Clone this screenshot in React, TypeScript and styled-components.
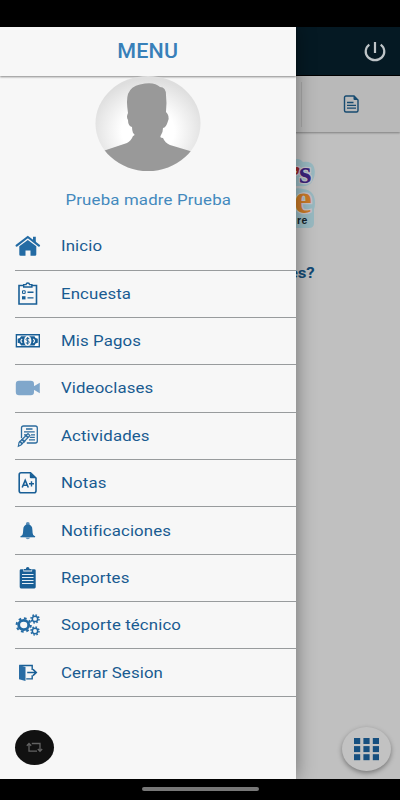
import React from 'react';
import styled, { createGlobalStyle } from 'styled-components';

const GlobalStyle = createGlobalStyle`
  * { box-sizing: border-box; }
  html, body { margin: 0; padding: 0; background: #000; }
  body { font-family: Roboto, "Liberation Sans", sans-serif; overflow: hidden; }
  svg { display: block; }
`;

const Phone = styled.div`
  width: 400px;
  height: 800px;
  display: grid;
  grid-template-rows: 27px 752px 21px;
  background: #000;
`;

const StatusBar = styled.div`
  background: #000;
`;

const Screen = styled.div`
  position: relative;
  overflow: hidden;
  background: #c0c0c0;
`;

const NavigationBar = styled.div`
  display: flex;
  justify-content: center;
  align-items: center;
  padding-bottom: 2px;
`;

const HomeHandle = styled.div`
  width: 117px;
  height: 4px;
  border-radius: 2px;
  background: #777;
`;

const Page = styled.main`
  height: 100%;
  display: flex;
  flex-direction: column;
`;

const PageHeader = styled.header`
  height: 49px;
  flex: none;
  display: flex;
  align-items: center;
  justify-content: flex-end;
  padding: 1px 13px 0 0;
  background: #051923;
  border-bottom: 1px solid #000;
`;

const TabBar = styled.nav`
  height: 56px;
  flex: none;
  display: grid;
  grid-template-columns: 1fr 99px;
  align-items: center;
  background: #b9b9b9;
  box-shadow: 0 1px 2px rgba(0, 0, 0, 0.35);
`;

const Tab = styled.div`
  grid-column: 2;
  height: 45px;
  display: flex;
  align-items: center;
  justify-content: center;
  border-left: 1px solid #a7a7a7;
`;

const Welcome = styled.section`
  width: 230px;
  margin: 27px auto 0;
  display: flex;
  flex-direction: column;
  align-items: flex-end;
`;

const Question = styled.h2`
  margin: 34px 0 0;
  font-size: 15.3px;
  line-height: 20px;
  font-weight: 700;
  transform: scaleX(1.1);
  transform-origin: right;
  color: #124a74;
`;

const AppsButton = styled.button`
  position: absolute;
  right: 9px;
  bottom: 8px;
  width: 49px;
  height: 44px;
  padding: 0;
  border: 0;
  border-radius: 50%;
  display: grid;
  place-items: center;
  background: #c2c2c2;
  box-shadow: 0 2px 5px rgba(0, 0, 0, 0.38);
`;

const Drawer = styled.aside`
  position: absolute;
  top: 0;
  left: 0;
  bottom: 0;
  width: 296px;
  display: flex;
  flex-direction: column;
  background: #f7f7f7;
  box-shadow: 0 0 18px rgba(0, 0, 0, 0.42);
`;

const DrawerHeader = styled.header`
  height: 49px;
  flex: none;
  display: flex;
  align-items: center;
  justify-content: center;
  box-shadow: 0 1px 2px rgba(0, 0, 0, 0.45);
`;

const DrawerTitle = styled.h1`
  margin: 0;
  font-size: 19.5px;
  line-height: 24px;
  font-weight: 500;
  letter-spacing: 0.2px;
  transform: scaleX(1.1);
  color: #3880b9;
`;

const Profile = styled.div`
  height: 147.2px;
  flex: none;
  display: flex;
  flex-direction: column;
  align-items: center;
`;

const ProfileName = styled.div`
  margin-top: 19px;
  font-size: 15.3px;
  line-height: 20px;
  letter-spacing: 0.15px;
  transform: scaleX(1.1);
  color: #4389bd;
`;

const MenuList = styled.ul`
  list-style: none;
  margin: 0;
  padding: 0 0 0 15px;
`;

const MenuItem = styled.li`
  height: 47.36px;
  display: grid;
  grid-template-columns: 26px 1fr;
  column-gap: 20px;
  align-items: center;
  border-bottom: 1px solid #989b9d;
  color: #195b91;
  font-size: 15.3px;
  line-height: 20px;
`;

const Label = styled.span`
  letter-spacing: 0.1px;
  transform: scaleX(1.1);
  transform-origin: left;
`;

const SwitchButton = styled.button`
  margin: auto 0 14px 15px;
  width: 39px;
  height: 35px;
  padding: 0;
  border: 0;
  border-radius: 50%;
  display: grid;
  place-items: center;
  background: #111;
`;

const blue = '#195f96';

const icons = {
  home: (
    <svg width="26" height="24" viewBox="0 0 26 24">
      <path d="M1.600 11.600 12.800 3l11.200 8.600" fill="none" stroke="#236ba4" strokeWidth="2.200" strokeLinecap="round" strokeLinejoin="round" />
      <path d="M18 2.800h2.800v6L18 6.500z" fill="#236ba4" />
      <path d="M4.300 12.300 12.800 5.900l8.500 6.400v8.200q0 1.300-1.300 1.300h-4.500v-5.300h-5v5.300H5.600q-1.300 0-1.300-1.300z" fill="#236ba4" />
    </svg>
  ),
  survey: (
    <svg width="26" height="24" viewBox="0 0 26 24" fill="none" stroke={blue}>
      <path d="M9 3.500H4V22h17.500V3.500h-5" strokeWidth="1.600" />
      <path d="M8.700 2.600H11q.2-1.600 1.800-1.600t1.800 1.600h2.300V5H8.700z" strokeWidth="1.400" />
      <path d="M7.500 8.800h2.700v2.600H7.500z" strokeWidth="1" />
      <path d="M7 14.200h3.500v3.200H7z" fill={blue} stroke="none" />
      <path d="M12.500 10.200h6M12.500 15.900h6" strokeWidth="1.400" />
    </svg>
  ),
  money: (
    <svg width="26" height="24" viewBox="0 0 26 24">
      <path d="M1.400 5.700h22.900v12.100H1.400z" fill="#fff" stroke={blue} strokeWidth="1.400" />
      <path d="M6 7.200h13.500q.5 2.300 3.300 2.600v4q-2.800.3-3.300 2.600H6q-.5-2.300-3.300-2.600v-4Q5.500 9.500 6 7.200z" fill={blue} />
      <ellipse cx="12.700" cy="11.800" rx="3.700" ry="5.100" fill="#f7f7f7" />
      <path d="M14.300 9.700q-3.300-1.200-3.300.6 0 1 1.600 1.400t1.600 1.600q0 1.700-3.400.6M12.700 8v7.700" fill="none" stroke={blue} strokeWidth="1" />
      <path d="M7.200 9.900q-2.600 1.900 0 3.800M18.200 9.900q2.600 1.900 0 3.800" fill="none" stroke="#f7f7f7" strokeWidth="1.200" />
    </svg>
  ),
  video: (
    <svg width="26" height="24" viewBox="0 0 26 24" fill="#80a7cb">
      <rect x=".8" y="4.800" width="18.200" height="14.500" rx="3.200" />
      <path d="M18 10.800 24.800 6.800v10.500L18 13.300z" />
    </svg>
  ),
  activities: (
    <svg width="26" height="24" viewBox="0 0 26 24" fill="none" stroke="#2d6c9e">
      <path d="M6.500 14V4q0-2 2-2h11.800q2 0 2 2v13q0 2-2 2h-8.500" strokeWidth="1.300" />
      <path d="M11 5h6.500M9 7.900h10.700M9 10.800h4m3 0h4M14.800 13.300h5M14 15.800h6" strokeWidth="1.300" />
      <path d="m4 18.500 9-9 2 2-9 9.500-2.700 1.200z" fill="#dbe7f0" strokeWidth="1.100" />
      <path d="m6.500 15 3.500 3M4.500 17l3 3M10.500 11l2.500 2.500" strokeWidth="1.700" />
    </svg>
  ),
  grades: (
    <svg width="26" height="24" viewBox="0 0 26 24" fill="none" stroke={blue}>
      <path d="M15.500 1.700H6q-1.800 0-1.800 2v16.100q0 2 1.800 2h13.200q1.800 0 1.800-2V7z" strokeWidth="1.600" />
      <path d="M14.800 1.500v4.700q0 1 1 1h5.400z" fill={blue} stroke="none" />
      <path d="m7.200 16.500 3-7.200 3.100 7.200M8.200 14.200h4" strokeWidth="1.600" />
      <path d="M14 12.800h5M16.500 10.200v5.200" strokeWidth="1.400" />
    </svg>
  ),
  bell: (
    <svg width="26" height="24" viewBox="0 0 26 24" fill="#236aa1">
      <circle cx="12.800" cy="5" r="1.900" fill="#5b8eb8" />
      <path d="M7.400 16q.8-2.200.8-5 0-5.500 4.600-5.500t4.600 5.500q0 2.800.8 5l1.700 1.200H5.700z" />
      <path d="M5.500 17h14.600v1.300H5.500z" />
      <path d="M10.500 18.500h4.600q-.5 1.800-2.300 1.800t-2.300-1.800z" fill="#6895bb" />
    </svg>
  ),
  clipboard: (
    <svg width="26" height="24" viewBox="0 0 26 24" fill={blue}>
      <path d="M6 3.300h2.300v2.300h8.800V3.300h2.300q1.300 0 1.300 1.300v16.500q0 1.300-1.300 1.300H6q-1.300 0-1.300-1.300V4.600q0-1.300 1.300-1.300z" />
      <path d="M8.800 4.600V3h2q.2-2 1.900-2t1.900 2h2v1.600z" />
      <path d="M7 8.500h11.500M7 11.500h11.500M7 14.500h11.500M7 17.500h11.500" stroke="#e4eef5" strokeWidth="1" />
    </svg>
  ),
  gears: (
    <svg width="26" height="24" viewBox="0 0 26 24" fill="none" stroke="#236aa3">
      <ellipse cx="8.700" cy="12" rx="5" ry="4.700" strokeWidth="2.800" />
      <ellipse cx="8.700" cy="12" rx="7.100" ry="6.700" strokeWidth="2" strokeDasharray="2.700 2.720" />
      <circle cx="20" cy="5.900" r="2.700" strokeWidth="1.500" />
      <circle cx="20" cy="5.900" r="4" strokeWidth="1.500" strokeDasharray="1.570 1.570" />
      <circle cx="20" cy="18" r="2.700" strokeWidth="1.500" />
      <circle cx="20" cy="18" r="4" strokeWidth="1.500" strokeDasharray="1.570 1.570" />
    </svg>
  ),
  logout: (
    <svg width="26" height="24" viewBox="0 0 26 24" fill="none" stroke={blue}>
      <path d="M4.300 4.500h12.900V9M17.200 14.200v3.700h-6" strokeWidth="1.400" />
      <path d="M4 4 10.500 6v14L4 18.200z" fill="#2a6da4" stroke="none" />
      <path d="M12.200 11.500h8.500M18 8.400l3.300 3.100L18 14.600" strokeWidth="1.500" />
    </svg>
  ),
};

const items: { label: string; icon: keyof typeof icons }[] = [
  { label: 'Inicio', icon: 'home' },
  { label: 'Encuesta', icon: 'survey' },
  { label: 'Mis Pagos', icon: 'money' },
  { label: 'Videoclases', icon: 'video' },
  { label: 'Actividades', icon: 'activities' },
  { label: 'Notas', icon: 'grades' },
  { label: 'Notificaciones', icon: 'bell' },
  { label: 'Reportes', icon: 'clipboard' },
  { label: 'Soporte técnico', icon: 'gears' },
  { label: 'Cerrar Sesion', icon: 'logout' },
];

function Avatar() {
  return (
    <svg width="106" height="95" viewBox="0 0 106 95">
      <defs>
        <radialGradient id="avatarGlow" cx="50%" cy="58%" r="55%">
          <stop offset="0.45" stopColor="#fff" />
          <stop offset="1" stopColor="#dedede" />
        </radialGradient>
        <clipPath id="avatarClip"><ellipse cx="53" cy="47.500" rx="52.500" ry="47.500" /></clipPath>
      </defs>
      <g clipPath="url(#avatarClip)">
        <path d="M0 0h106v95H0z" fill="url(#avatarGlow)" />
        <path d="M0 78 11 74 32 67Q36 65 38 60Q41 59 38 57Q37 54 37 51Q33 50 33 44Q31 41 33 37Q31 24 33 18Q36 10 45 8.500Q59 5 65 11Q71 11 71 19Q72 27 71 36Q75 40 73 45Q71 52 68 52Q68 56 66 59Q64 62 68 62Q70 67 75 69L95 75 106 79V95H0z" fill="#999" />
      </g>
    </svg>
  );
}

function SchoolLogo() {
  return (
    <svg width="40" height="70" viewBox="0 0 40 70">
      <path d="M14 2q9-5 14 1 9-1 11 5 2 7-1 13-3 7-12 6H10z" fill="#98b9c1" />
      <path d="M10 36q8-9 18-6 12 1 12 14 0 4-1 6v14q0 5-5 5H0V49z" fill="#98b9c1" />
      <g fontFamily="Liberation Serif, serif" fontWeight="700" stroke="#c4c2c8" strokeWidth="2.500" paintOrder="stroke">
        <text x="17.500" y="26" fontSize="27" fill="#9c2625">’</text>
        <text x="24" y="24" fontSize="32" fill="#3d237b">s</text>
        <text x="19.500" y="54" fontSize="39" fill="#c97a27">e</text>
      </g>
      <text x="22" y="65" fontFamily="Liberation Sans, sans-serif" fontSize="10.500" fontWeight="700" letterSpacing=".5" fill="#15242a">re</text>
    </svg>
  );
}

export default function App() {
  return (
    <>
      <GlobalStyle />
      <Phone>
        <StatusBar />
        <Screen>
          <Page>
            <PageHeader>
              <svg width="24" height="22" viewBox="0 0 24 22" fill="none" stroke="#bec4c7" strokeWidth="2.200">
                <path d="M12 1v11M6.300 3.600a9.300 8.700 0 1 0 11.400 0" />
              </svg>
            </PageHeader>
            <TabBar>
              <Tab>
                <svg width="17" height="18" viewBox="0 0 17 18" fill="none" stroke="#174b70">
                  <path d="M11 1H3Q1.500 1 1.500 2.500v13Q1.500 17 3 17h10.500q1.500 0 1.500-1.500V5z" strokeWidth="1.400" />
                  <path d="M10.500 1v3q0 1 1 1H15z" fill="#174b70" stroke="none" />
                  <path d="M4 7.500h6.500M4 10.300h9M4 13.200h9" strokeWidth="1.300" />
                </svg>
              </Tab>
            </TabBar>
            <Welcome>
              <SchoolLogo />
              <Question>es?</Question>
            </Welcome>
          </Page>
          <AppsButton aria-label="Aplicaciones">
            <svg width="25" height="23" viewBox="0 0 25 23" fill="#164f7f">
              {[0, 8.1, 16.2].map((y) => [0, 9.4, 18.8].map((x) => (
                <rect key={`${x}-${y}`} x={x} y={y} width="6.200" height="6" />
              )))}
            </svg>
          </AppsButton>
          <Drawer>
            <DrawerHeader><DrawerTitle>MENU</DrawerTitle></DrawerHeader>
            <Profile>
              <Avatar />
              <ProfileName>Prueba madre Prueba</ProfileName>
            </Profile>
            <MenuList>
              {items.map(({ label, icon }) => (
                <MenuItem key={label}>
                  {icons[icon]}
                  <Label>{label}</Label>
                </MenuItem>
              ))}
            </MenuList>
            <SwitchButton aria-label="Cambiar usuario">
              <svg width="17" height="11" viewBox="0 0 17 11" fill="none" stroke="#626262" strokeWidth="1.300">
                <path d="M.8 3.800 3 1.500l2.200 2.300M3 2v7.200h8M5.800 1.500H14v7.200M11.800 7 14 9.300 16.200 7" />
              </svg>
            </SwitchButton>
          </Drawer>
        </Screen>
        <NavigationBar><HomeHandle /></NavigationBar>
      </Phone>
    </>
  );
}
